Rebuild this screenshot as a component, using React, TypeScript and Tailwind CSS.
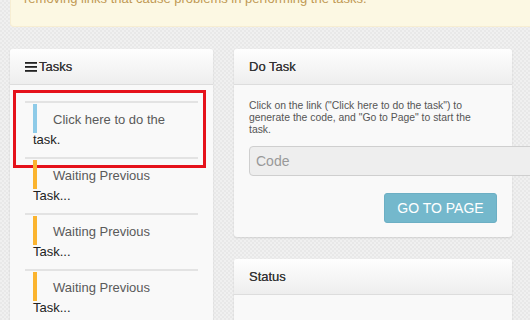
import React from "react";

const font = { fontFamily: '"Liberation Sans", Arial, sans-serif' };

function Item({ first, last, color, red }: { first: string; last: string; color: string; red?: boolean }) {
  return (
    <li className="relative border-t-2 border-[#e3e3e3] pt-[7px] pb-[7px] pl-[8px] pr-[15px] text-[13px] leading-[20px]">
      <span className={`absolute left-[8px] top-[1px] w-[4px] h-[29px] ${color}`} />
      <div className="indent-[20px]">
        <span className="text-[#5a5a5a]">{first}</span>
        <br />
        <span className="text-[#222]">{last}</span>
      </div>
      {red && (
        <div className="absolute -left-[12px] -top-[13px] w-[193px] h-[78px] border-[3px] border-[#e5121b]" />
      )}
    </li>
  );
}

export default function App() {
  return (
    <div
      style={font}
      className="w-[530px] h-[320px] overflow-hidden bg-[#ececec] bg-[repeating-conic-gradient(#e8e8e8_0%_25%,#f0f0f0_0%_50%)] bg-[length:4px_4px]"
    >
      <div className="pl-[10px]">
        <div className="flex w-[540px] h-[27px] bg-[#fcf8e3] border border-t-0 border-[#f7eed3] rounded-bl-[4px] pl-[13px]">
          <p className="-mt-[11px] text-[13px] leading-[20px] text-[#c09853] whitespace-nowrap">
            removing links that cause problems in performing the tasks.
          </p>
        </div>

        <div className="mt-[22px] flex items-start gap-[21px]">
          {/* Tasks panel */}
          <div className="w-[203px] h-[300px] bg-[#f9f9f9] rounded-[3px] shadow-[0_1px_2px_rgba(0,0,0,0.12)]">
            <div className="h-[36px] flex items-center pl-[15px] bg-linear-to-b from-[#fefefe] to-[#eeeeee] border-b border-[#dddddd] rounded-t-[3px]">
              <svg width="12" height="11" viewBox="0 0 12 11" className="mr-[2px]">
                <rect x="0" y="1" width="12" height="1.8" fill="#222" />
                <rect x="0" y="5" width="12" height="1.8" fill="#222" />
                <rect x="0" y="9" width="12" height="1.8" fill="#222" />
              </svg>
              <span className="text-[13px] text-[#333] [text-shadow:0_0_0.5px_#555]">Tasks</span>
            </div>
            <ul className="pt-[16px] pl-[15px] pr-[15px]">
              <Item first="Click here to do the" last="task." color="bg-[#8ecbe8]" red />
              <Item first="Waiting Previous" last="Task..." color="bg-[#fbb42f]" />
              <Item first="Waiting Previous" last="Task..." color="bg-[#fbb42f]" />
              <Item first="Waiting Previous" last="Task..." color="bg-[#fbb42f]" />
            </ul>
          </div>

          {/* Right column */}
          <div className="w-[278px] flex flex-col gap-[22px]">
            <div className="bg-[#f9f9f9] rounded-[3px] shadow-[0_1px_2px_rgba(0,0,0,0.12)]">
              <div className="h-[36px] flex items-center px-[15px] bg-linear-to-b from-[#fefefe] to-[#eeeeee] border-b border-[#dddddd] rounded-t-[3px]">
                <span className="text-[13px] text-[#333] [text-shadow:0_0_0.5px_#555]">Do Task</span>
              </div>
              <div className="pt-[15px] pb-[14px] px-[15px]">
                <p className="text-[10.4px] leading-[12px] text-[#555] whitespace-nowrap">
                  Click on the link ("Click here to do the task") to
                  <br />
                  generate the code, and "Go to Page" to start the
                  <br />
                  task.
                </p>
                <input
                  placeholder="Code"
                  className="mt-[10px] w-[300px] h-[30px] bg-[#eeeeee] border border-[#cfcfcf] rounded-[4px] px-[6px] text-[14px] text-[#555] placeholder:text-[#999] outline-none"
                />
                <div className="mt-[17px] flex justify-end">
                  <button className="w-[113px] h-[30px] bg-[#74b8cc] border border-[#6cafc4] rounded-[3px] text-white text-[14px]">
                    GO TO PAGE
                  </button>
                </div>
              </div>
            </div>

            <div className="h-[80px] bg-[#f9f9f9] rounded-[3px] shadow-[0_1px_2px_rgba(0,0,0,0.12)]">
              <div className="h-[36px] flex items-center px-[15px] bg-linear-to-b from-[#fefefe] to-[#eeeeee] border-b border-[#dddddd] rounded-t-[3px]">
                <span className="text-[13px] text-[#333] [text-shadow:0_0_0.5px_#555]">Status</span>
              </div>
            </div>
          </div>
        </div>
      </div>
    </div>
  );
}
